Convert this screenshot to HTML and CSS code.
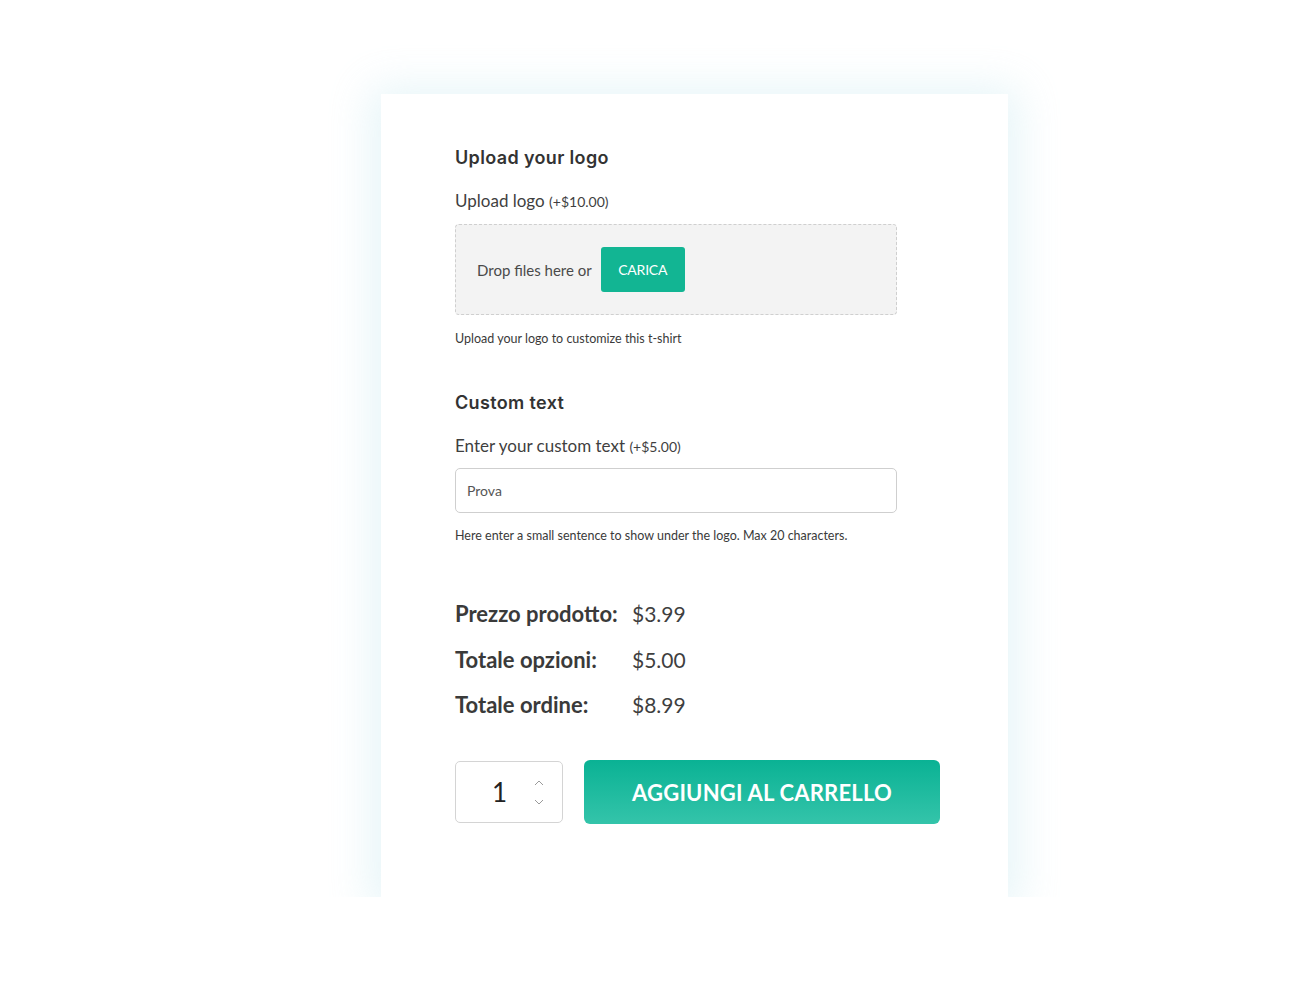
FILE: index.html
```html
<!DOCTYPE html>
<html lang="it">
<head>
<meta charset="utf-8">
<title>Product options</title>
<link rel="stylesheet" href="styles.css">
</head>
<body>
<div class="card">
  <section class="option">
    <h3 class="opt-title">Upload your logo</h3>
    <label class="opt-label">Upload logo <span class="price">(+$10.00)</span></label>
    <div class="dropzone">
      <span class="drop-text">Drop files here or</span>
      <button class="upload-btn" type="button">CARICA</button>
    </div>
    <p class="help">Upload your logo to customize this t-shirt</p>
  </section>
  <section class="option second">
    <h3 class="opt-title">Custom text</h3>
    <label class="opt-label">Enter your custom text <span class="price">(+$5.00)</span></label>
    <div class="text-input">Prova</div>
    <p class="help">Here enter a small sentence to show under the logo. Max 20 characters.</p>
  </section>
  <div class="totals">
    <div class="row"><span class="t-label">Prezzo prodotto:</span><span class="t-val">$3.99</span></div>
    <div class="row"><span class="t-label">Totale opzioni:</span><span class="t-val">$5.00</span></div>
    <div class="row"><span class="t-label">Totale ordine:</span><span class="t-val">$8.99</span></div>
  </div>
  <div class="cart">
    <div class="qty">
      <span class="qty-num">1</span>
      <span class="spin">
        <svg width="10" height="6" viewBox="0 0 10 6"><path d="M1 5 L5 1 L9 5" fill="none" stroke="#9a9a9a" stroke-width="1"/></svg>
        <svg width="10" height="6" viewBox="0 0 10 6"><path d="M1 1 L5 5 L9 1" fill="none" stroke="#9a9a9a" stroke-width="1"/></svg>
      </span>
    </div>
    <button class="add-btn" type="button">AGGIUNGI AL CARRELLO</button>
  </div>
</div>
</body>
</html>
```

FILE: styles.css
```css
html, body {
  margin: 0;
  padding: 0;
  background: #ffffff;
}
body {
  font-family: Lato, "Noto Sans", sans-serif;
  color: #3a3a3a;
}
.card {
  width: 627px;
  height: 803px;
  box-sizing: border-box;
  margin: 94px 0 0 381px;
  padding: 0 0 0 74px;
  background: #fff;
  box-shadow: 0 4px 40px 10px rgba(200, 232, 240, 0.45);
}
.option {
  width: 442px;
  padding-top: 52px;
}
.option.second {
  padding-top: 44px;
}
.opt-title {
  margin: 0;
  font-family: Inter, "Open Sans", sans-serif;
  font-weight: 600;
  font-size: 18px;
  line-height: 24px;
  color: #333;
  letter-spacing: 0.35px;
}
.opt-label {
  display: block;
  margin-top: 20px;
  font-size: 17px;
  line-height: 22px;
  color: #3f3f3f;
}
.price {
  font-size: 14px;
}
.dropzone {
  margin-top: 11px;
  height: 91px;
  box-sizing: border-box;
  border: 1px dashed #cfcfcf;
  border-radius: 4px;
  background: #f3f3f3;
  display: flex;
  align-items: center;
  padding-left: 21px;
}
.drop-text {
  font-size: 15px;
  color: #4a4a4a;
}
.upload-btn {
  margin-left: 9px;
  width: 84px;
  height: 45px;
  border: 0;
  border-radius: 3px;
  background: #12b593;
  color: #fff;
  font-family: Lato, "Noto Sans", sans-serif;
  font-size: 14px;
  letter-spacing: -0.2px;
}
.help {
  margin: 16px 0 0;
  font-size: 12.5px;
  line-height: 16px;
  color: #3a3a3a;
}
.text-input {
  margin-top: 10px;
  height: 45px;
  box-sizing: border-box;
  border: 1px solid #cfcfcf;
  border-radius: 5px;
  padding-left: 11px;
  display: flex;
  align-items: center;
  font-size: 14px;
  color: #555;
}
.text-input + .help {
  margin-top: 15px;
}
.totals {
  margin-top: 56px;
  display: flex;
  flex-direction: column;
  gap: 16.5px;
}
.row {
  display: flex;
  align-items: baseline;
  height: 29px;
}
.t-label {
  width: 177px;
  font-weight: 700;
  font-size: 22px;
  color: #3a3a3a;
}
.t-val {
  font-size: 21px;
  color: #3f3f3f;
}
.cart {
  margin-top: 40px;
  display: flex;
  align-items: center;
  gap: 21px;
}
.qty {
  width: 108px;
  height: 62px;
  box-sizing: border-box;
  border: 1px solid #d4d4d4;
  border-radius: 5px;
  display: flex;
  align-items: center;
  padding-left: 36px;
}
.qty-num {
  font-size: 26px;
  color: #222;
  width: 42px;
}
.spin {
  display: flex;
  flex-direction: column;
  gap: 13px;
}
.add-btn {
  width: 356px;
  height: 64px;
  border: 0;
  border-radius: 6px;
  background: linear-gradient(180deg, #0ab294 0%, #34c4aa 100%);
  color: #fff;
  font-family: Lato, "Noto Sans", sans-serif;
  font-weight: 700;
  font-size: 22px;
  letter-spacing: 0.2px;
}
```
